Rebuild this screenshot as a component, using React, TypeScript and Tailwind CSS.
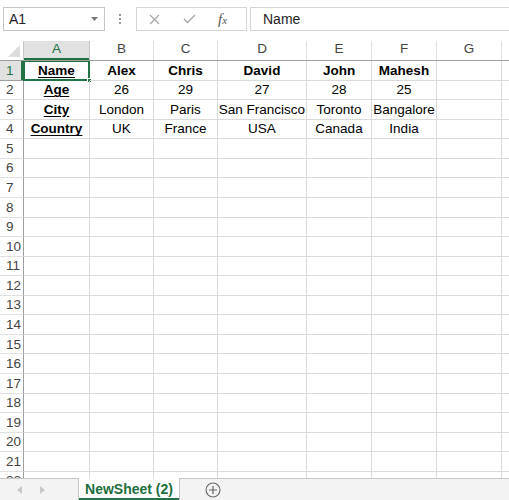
import React from "react";

const cols = [
  { key: "A", w: 66 },
  { key: "B", w: 64 },
  { key: "C", w: 64 },
  { key: "D", w: 89 },
  { key: "E", w: 65 },
  { key: "F", w: 65 },
  { key: "G", w: 65 },
];

const data: string[][] = [
  ["Name", "Alex", "Chris", "David", "John", "Mahesh", ""],
  ["Age", "26", "29", "27", "28", "25", ""],
  ["City", "London", "Paris", "San Francisco", "Toronto", "Bangalore", ""],
  ["Country", "UK", "France", "USA", "Canada", "India", ""],
];

const font = { fontFamily: '"Liberation Sans", Arial, sans-serif' };

function FormulaBar() {
  return (
    <div className="flex h-[41px] items-start bg-white pt-[7px]">
      <div className="ml-[3px] flex h-[24px] w-[102px] items-center justify-between border border-[#c6c6c6] pl-[5px] pr-[6px] text-[14px] text-[#222]">
        <span>A1</span>
        <svg width="7" height="4" viewBox="0 0 7 4">
          <path d="M0 0 L7 0 L3.5 4 Z" fill="#777" />
        </svg>
      </div>
      <div className="ml-[14px] flex h-[24px] flex-col items-center justify-center gap-[2px]">
        <span className="block h-[2px] w-[2px] bg-[#999]" />
        <span className="block h-[2px] w-[2px] bg-[#999]" />
        <span className="block h-[2px] w-[2px] bg-[#999]" />
      </div>
      <div className="ml-[15px] flex h-[24px] w-[111px] items-center border border-[#d4d4d4]">
        <svg className="ml-[12px]" width="11" height="11" viewBox="0 0 11 11">
          <path d="M1 1 L10 10 M10 1 L1 10" stroke="#a6a6a6" strokeWidth="1.2" />
        </svg>
        <svg className="ml-[23px]" width="13" height="10" viewBox="0 0 13 10">
          <path d="M1 5 L4.5 8.5 L12 1" stroke="#a6a6a6" strokeWidth="1.4" fill="none" />
        </svg>
        <span
          className="ml-[22px] text-[15px] italic text-[#555]"
          style={{ fontFamily: '"Liberation Serif", "Times New Roman", serif' }}
        >
          f<span className="text-[11px]">x</span>
        </span>
      </div>
      <div className="ml-[3px] flex h-[24px] flex-1 items-center border-y border-l border-[#d4d4d4] pl-[12px] text-[14px] text-[#222]">
        Name
      </div>
    </div>
  );
}

function Header() {
  return (
    <div className="flex h-[20px] border-b border-[#9e9e9e] bg-white text-[13.5px] text-[#444]">
      <div className="relative w-[24px] border-r border-[#c8c8c8] bg-white">
        <svg className="absolute bottom-[3px] right-[3px]" width="12" height="12" viewBox="0 0 12 12">
          <path d="M12 0 L12 12 L0 12 Z" fill="#dcdcdc" />
        </svg>
      </div>
      {cols.map((c, i) => (
        <div
          key={c.key}
          style={{ width: c.w }}
          className={
            i === 0
              ? "flex items-end justify-center border-r border-[#c8c8c8] bg-[#e1e1e1] pb-[1px] text-[#217346] shadow-[inset_0_-2px_0_#217346]"
              : "flex items-end justify-center border-r border-[#e0e0e0] pb-[1px]"
          }
        >
          {c.key}
        </div>
      ))}
      <div className="flex-1" />
    </div>
  );
}

function Row({ n }: { n: number }) {
  const cells = data[n - 1];
  const selected = n === 1;
  return (
    <div className="flex h-[19.57px] shrink-0 text-[13.5px]">
      <div
        className={
          selected
            ? "flex w-[24px] items-center border-r border-b border-[#9e9e9e] bg-[#e1e1e1] pl-[6px] pt-[1px] text-[#217346] shadow-[inset_-2px_0_0_#217346]"
            : "flex w-[24px] items-center border-r border-b border-[#9e9e9e] border-b-[#e0e0e0] bg-white pl-[6px] pt-[1px] text-[#444]"
        }
      >
        {n}
      </div>
      {cols.map((c, i) => {
        const v = cells ? cells[i] : "";
        const bold = i === 0 || n === 1;
        const underline = i === 0 && !!v;
        return (
          <div
            key={c.key}
            style={{ width: c.w }}
            className={
              "relative flex items-center justify-center overflow-visible whitespace-nowrap border-r border-b border-[#dadada] pt-[1px] text-black " +
              (bold ? "font-bold " : "") +
              (underline ? "underline underline-offset-2 " : "")
            }
          >
            {v}
            {selected && i === 0 && (
              <>
                <div className="pointer-events-none absolute -left-[1px] -top-[1px] bottom-[-1px] right-[-1px] border-2 border-[#217346]" />
                <div className="absolute bottom-[-3px] right-[-3px] h-[5px] w-[5px] border border-white bg-[#217346]" />
              </>
            )}
          </div>
        );
      })}
      <div className="flex-1 border-b border-[#dadada]" />
    </div>
  );
}

function TabBar() {
  return (
    <div className="flex h-[22px] shrink-0 border-t border-[#c6c6c6] bg-[#f3f3f3]">
      <div className="flex w-[78px] items-center">
        <svg className="ml-[17px]" width="5" height="8" viewBox="0 0 5 8">
          <path d="M5 0 L0 4 L5 8 Z" fill="#c8c8c8" />
        </svg>
        <svg className="ml-[18px]" width="5" height="8" viewBox="0 0 5 8">
          <path d="M0 0 L5 4 L0 8 Z" fill="#c8c8c8" />
        </svg>
      </div>
      <div className="-mt-[1px] flex h-[22px] w-[102px] items-center justify-center border-x border-[#c6c6c6] bg-white text-[14px] font-bold text-[#1e6e3c] shadow-[inset_0_-2px_0_#217346]">
        NewSheet (2)
      </div>
      <div className="ml-[25px] flex items-center">
        <svg width="16" height="16" viewBox="0 0 16 16">
          <circle cx="8" cy="8" r="7" fill="none" stroke="#666" strokeWidth="1.1" />
          <path d="M8 4 V12 M4 8 H12" stroke="#666" strokeWidth="1.2" />
        </svg>
      </div>
    </div>
  );
}

export default function App() {
  const rows = Array.from({ length: 22 }, (_, i) => i + 1);
  return (
    <div className="flex h-[500px] w-[509px] flex-col overflow-hidden bg-white" style={font}>
      <FormulaBar />
      <Header />
      <div className="flex min-h-0 flex-1 flex-col overflow-hidden">
        {rows.map((n) => (
          <Row key={n} n={n} />
        ))}
      </div>
      <TabBar />
    </div>
  );
}
